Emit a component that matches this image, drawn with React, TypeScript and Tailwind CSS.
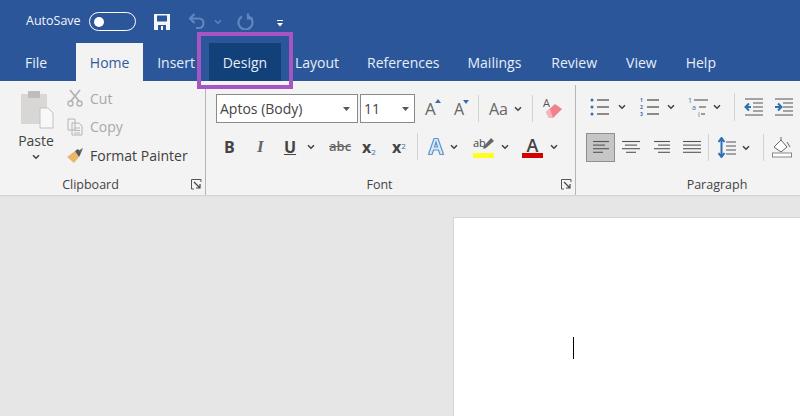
import React from "react";

const Chev = ({ w = 10, c = "#404040" }: { w?: number; c?: string }) => (
  <svg width={w} height="6" viewBox="0 0 10 6" fill="none" className="shrink-0"><path d="M2 1.200 5 4.200 8 1.200" stroke={c} strokeWidth="1.500" /></svg>
);
const Launcher = () => (
  <svg width="11" height="11" viewBox="0 0 11 11" fill="none"><path d="M10 3V.5H.5V10H3" stroke="#555" /><path d="M3 3 9 9M9 5v4H5" stroke="#444" strokeWidth="1.200" /></svg>
);
const Sep = ({ h = 27 }: { h?: number }) => <div className="w-px bg-[#d2d2d2] shrink-0" style={{ height: h }} />;

const Lines = ({ dots, color = "#444" }: { dots: "b" | "n" | "m"; color?: string }) => (
  <svg width="21" height="20" viewBox="0 0 21 20" fill="none">
    {dots === "b" && [3, 10, 17].map((y) => <circle key={y} cx="2" cy={y} r="1.500" fill="#3b6ea8" />)}
    {dots === "n" && ["1", "2", "3"].map((t, i) => <text key={t} x="0" y={5 + i * 7} fontSize="5" fontWeight="700" fill="#3b6ea8" fontFamily="Open Sans">{t}</text>)}
    {dots === "b" || dots === "n" ? [3, 10, 17].map((y) => <path key={y} d={`M7 ${y}H19`} stroke={color} strokeWidth="1.200" />) : null}
    {dots === "m" && (
      <>
        <text x="0" y="6" fontSize="7" fill="#3b6ea8" fontFamily="Open Sans">1</text>
        <text x="4" y="13" fontSize="7" fill="#3b6ea8" fontFamily="Open Sans">a</text>
        <text x="10" y="19.500" fontSize="7" fill="#3b6ea8" fontFamily="Open Sans">i</text>
        <path d="M6 3H20M11 10H18M13 17H17" stroke={color} strokeWidth="1.200" />
      </>
    )}
  </svg>
);

const Align = ({ rows }: { rows: [number, number][] }) => (
  <svg width="20" height="15" viewBox="0 0 20 15" fill="none">
    {rows.map(([a, b], i) => <path key={i} d={`M${a} ${1.500 + i * 3.600}H${b}`} stroke="#555" strokeWidth="1.100" />)}
  </svg>
);

const Indent = ({ inc }: { inc?: boolean }) => (
  <svg width="20" height="18" viewBox="0 0 20 18" fill="none">
    <path d="M1 1H19M9 5H19M9 9H19M9 13H19M1 17H19" stroke="#555" strokeWidth="1" />
    {inc ? <path d="M1 9H6M4 5.500 7.500 9 4 12.500" stroke="#2f6db5" strokeWidth="2" /> : <path d="M7 9H2M5 5.500 1.500 9 5 12.500" stroke="#2f6db5" strokeWidth="2" />}
  </svg>
);

const Tab = ({ label, cls = "" }: { label: string; cls?: string }) => (
  <div className={`h-full flex items-center px-[14px] text-[#e8eef8] ${cls}`}>{label}</div>
);

const GroupLabel = ({ children, launcher, cls = "" }: { children: string; launcher?: boolean; cls?: string }) => (
  <div className={`h-[20px] flex items-center relative justify-center text-[12.5px] text-[#444] ${cls}`}>
    {children}
    {launcher && <div className="absolute right-[3px] top-[4px]"><Launcher /></div>}
  </div>
);

export default function App() {
  return (
    <div className="relative w-[800px] h-[416px] overflow-hidden bg-[#e6e6e6] flex flex-col text-[14px]" style={{ fontFamily: '"Open Sans", "Noto Sans", sans-serif' }}>
      {/* Title bar */}
      <div className="h-[43px] bg-[#2b579a] flex items-center shrink-0 text-white pl-[26px]">
        <span className="text-[12.5px] w-[63px] text-[#f2f5fa]">AutoSave</span>
        <div className="w-[47px] h-[19px] rounded-full border-[1.5px] border-white flex items-center pl-[4px]">
          <div className="w-[10px] h-[10px] rounded-full bg-white" />
        </div>
        <svg className="ml-[18px]" width="16" height="16" viewBox="0 0 16 16">
          <path d="M0 0H16V16H0Z" fill="#f4f6fa" />
          <rect x="3" y="1.500" width="10" height="6" fill="#2b579a" />
          <rect x="4" y="11" width="8" height="5" fill="#2b579a" />
          <rect x="7" y="12" width="2" height="4" fill="#f4f6fa" />
        </svg>
        <svg className="ml-[18px]" width="18" height="17" viewBox="0 0 18 17" fill="none">
          <path d="M6.500 1 2 5.500 6.500 10" stroke="#5f86bd" strokeWidth="2.200" />
          <path d="M3 5.500H11C17 5.500 17 15 11 15H8" stroke="#5f86bd" strokeWidth="2.200" />
        </svg>
        <div className="ml-[7px]"><Chev w={10} c="#5f86bd" /></div>
        <svg className="ml-[14px]" width="17" height="17" viewBox="0 0 17 17" fill="none">
          <path d="M5 3.500A7 7 0 1 0 12 3.500" stroke="#5f86bd" strokeWidth="2.200" />
          <path d="M11 .5V5.500H16" stroke="#5f86bd" strokeWidth="2.200" />
        </svg>
        <svg className="ml-[23px] mt-[3px]" width="6" height="7" viewBox="0 0 6 7"><path d="M0 0H6V1H0ZM0 3H6L3 6.500Z" fill="#fff" /></svg>
      </div>
      {/* Tabs */}
      <div className="h-[38px] bg-[#2b579a] flex shrink-0 pl-[11px] text-[14px]">
        <Tab label="File" />
        <div className="ml-[15px] h-full w-[67px] flex items-center justify-center bg-[#f3f3f3] text-[#2f5a9a]">Home</div>
        <Tab label="Insert" />
        <div className="w-[72px] h-full flex items-center justify-center bg-[#124078] text-[#e8eef8]">Design</div>
        <Tab label="Layout" />
        <Tab label="References" />
        <Tab label="Mailings" />
        <Tab label="Review" cls="ml-[2px]" />
        <Tab label="View" cls="ml-[1px]" />
        <Tab label="Help" cls="ml-[1px]" />
      </div>
      {/* Ribbon */}
      <div className="h-[115px] bg-[#f3f3f3] border-b border-[#d4d4d4] flex shrink-0 pt-[4px] text-[#444]">
        {/* Clipboard */}
        <div className="w-[206px] h-[110px] border-r border-[#b5b5b5] flex flex-col shrink-0">
          <div className="h-[90px] flex">
            <div className="w-[62px] ml-[5px] flex flex-col items-center pt-[5px]">
              <svg width="34" height="39" viewBox="0 0 34 39" className="ml-[2px]">
                <rect x="1" y="4" width="26" height="30" fill="#d9d6d6" />
                <rect x="8" y="1" width="12" height="7" rx="1" fill="#bfbcbc" />
                <path d="M20 18H28L33 23V38H20Z" fill="#f8f8f8" stroke="#c4c2c2" />
              </svg>
              <span className="mt-[2px] leading-[20px]">Paste</span>
              <div className="mt-[3px]"><Chev /></div>
            </div>
            <div className="flex flex-col -mt-[1px]">
              <div className="h-[28.5px] flex items-center gap-[7px] text-[#a8a8a8]">
                <svg width="16" height="18" viewBox="0 0 16 18" fill="none"><path d="M3 1 12 12M13 1 4 12" stroke="#b4b4b4" strokeWidth="1.800" /><circle cx="3.500" cy="14.500" r="2.500" stroke="#b4b4b4" strokeWidth="1.400" /><circle cx="12.500" cy="14.500" r="2.500" stroke="#b4b4b4" strokeWidth="1.400" /></svg>
                Cut
              </div>
              <div className="h-[28.5px] flex items-center gap-[7px] text-[#a8a8a8]">
                <svg width="16" height="18" viewBox="0 0 16 18" fill="none"><path d="M1 1H8V12H1ZM5 5H12L15 8V17H5Z" stroke="#b4b4b4" fill="#f3f3f3" /><path d="M7 10H13M7 12.500H13M7 15H13" stroke="#b4b4b4" /></svg>
                Copy
              </div>
              <div className="h-[28.5px] flex items-center gap-[6px] text-[#404040]">
                <svg width="17" height="15" viewBox="0 0 17 15"><path d="M0 9 8 3 12 9 7 15Z" fill="#e8b868" /><path d="M8 3 11 1 14 5 12 9Z" fill="#555" /><path d="M11 3 16 0 14 5Z" fill="#666" /></svg>
                Format Painter
              </div>
            </div>
          </div>
          <GroupLabel launcher cls="pr-[24px]">Clipboard</GroupLabel>
        </div>
        {/* Font */}
        <div className="w-[370px] h-[110px] border-r border-[#b5b5b5] flex flex-col shrink-0 pl-[10px]">
          <div className="h-[38px] pt-[9px] flex items-start">
            <div className="w-[142px] h-[29px] bg-white border border-[#8a8a8a] flex items-center justify-between pl-[3px] pr-[7px] text-[#444]">
              <span>Aptos (Body)</span>
              <svg width="7" height="4" viewBox="0 0 7 4"><path d="M0 0H7L3.500 4Z" fill="#555" /></svg>
            </div>
            <div className="ml-[2px] w-[55px] h-[29px] bg-white border border-[#8a8a8a] flex items-center justify-between pl-[3px] pr-[5px] text-[#444]">
              <span>11</span>
              <svg width="7" height="4" viewBox="0 0 7 4"><path d="M0 0H7L3.500 4Z" fill="#555" /></svg>
            </div>
            <div className="flex items-center h-[29px] text-[#666]">
              <div className="w-[10px]" />
              <span className="text-[17px] relative w-[29px]">A<svg className="absolute left-[10px] top-[3px]" width="6" height="4"><path d="M0 4 3 0 6 4Z" fill="#3b6ea8" /></svg></span>
              <span className="text-[16px] relative w-[24px]">A<svg className="absolute left-[9px] top-[3px]" width="6" height="4"><path d="M0 0H6L3 4Z" fill="#3b6ea8" /></svg></span>
              <Sep />
              <span className="text-[16px] ml-[10px] w-[24px]">Aa</span>
              <div className="w-[12px]"><Chev /></div>
              <div className="w-[7px]" />
              <Sep />
              <div className="ml-[10px] relative w-[20px] h-[24px]">
                <span className="absolute left-0 -top-[2px] text-[11px] text-[#555]">A</span>
                <svg className="absolute left-[2px] top-[4px]" width="18" height="18" viewBox="0 0 18 18">
                  <path d="M1 11 10 3 17 8 8 17H4Z" fill="#f0808c" />
                  <path d="M1 11 4 17H8L5 8Z" fill="#f7b5bc" />
                </svg>
              </div>
            </div>
          </div>
          <div className="h-[52px] pt-[10px] flex items-start text-[#444]">
            <div className="h-[27px] flex items-center">
              <span className="w-[31px] pl-[8px] font-bold text-[16px]">B</span>
              <span className="w-[29px] pl-[10px] italic font-bold text-[17px] text-[#666]" style={{ fontFamily: '"Liberation Serif", serif' }}>I</span>
              <span className="w-[30px] pl-[8px] font-bold text-[16px] underline">U</span>
              <div className="w-[21px]"><Chev /></div>
              <span className="w-[33px] pl-[2px] text-[13px] font-semibold line-through text-[#666]">abc</span>
              <span className="w-[30px] text-[16px] font-bold pl-[2px]">x<sub className="text-[8px] font-normal text-[#3b6ea8]">2</sub></span>
              <span className="w-[27px] text-[16px] font-bold pl-[2px]">x<sup className="text-[8px] font-normal text-[#3b6ea8]">2</sup></span>
              <Sep />
              <svg className="ml-[9px]" width="18" height="19" viewBox="0 0 18 19" fill="none"><path d="M1.500 17.500 7 1.500H11L16.500 17.500H13L11.500 13H6.500L5 17.500ZM7.500 10H10.500L9 5Z" fill="#dbe9f7" stroke="#5d95cf" strokeWidth="1.200" /></svg>
              <div className="ml-[4px] w-[24px]"><Chev /></div>
              <div className="w-[21px] relative h-[22px] flex flex-col items-center">
                <span className="text-[11px] leading-[13px] self-start">ab</span>
                <div className="absolute right-0 top-[2px]"><svg width="11" height="12" viewBox="0 0 11 12"><path d="M0 11 1 8 8 0 11 3 3 10Z" fill="#666" /></svg></div>
                <div className="absolute left-0 bottom-0 w-[21px] h-[5px] bg-[#ffff1e]" />
              </div>
              <div className="ml-[6px] w-[22px]"><Chev /></div>
              <div className="w-[21px] h-[22px] relative flex justify-center">
                <span className="text-[18px] leading-[18px] font-semibold">A</span>
                <div className="absolute left-0 bottom-0 w-[21px] h-[5px] bg-[#d30000]" />
              </div>
              <div className="ml-[6px]"><Chev /></div>
            </div>
          </div>
          <GroupLabel launcher cls="pr-[32px]">Font</GroupLabel>
        </div>
        {/* Paragraph */}
        <div className="flex-1 h-[110px] flex flex-col pl-[10px]">
          <div className="h-[48px] pt-[12px] flex items-start">
            <div className="h-[20px] flex items-center">
              <div className="ml-[4px] w-[27px]"><Lines dots="b" /></div>
              <div className="w-[23px]"><Chev /></div>
              <div className="w-[26px]"><Lines dots="n" /></div>
              <div className="w-[22px]"><Chev /></div>
              <div className="w-[24px]"><Lines dots="m" /></div>
              <div className="w-[22px]"><Chev /></div>
              <div className="mr-[9px]"><Sep h={28} /></div>
              <div className="w-[30px]"><Indent /></div>
              <Indent inc />
            </div>
          </div>
          <div className="h-[42px] flex items-start">
            <div className="w-[29px] h-[29px] bg-[#c6c6c6] border border-[#8f8f8f] flex items-center justify-center">
              <Align rows={[[2, 18], [2, 14], [2, 18], [2, 12]]} />
            </div>
            <div className="h-[29px] flex items-center">
              <div className="w-[31px] flex justify-center"><Align rows={[[1, 19], [4, 16], [1, 19], [5, 15]]} /></div>
              <div className="w-[30px] flex justify-center"><Align rows={[[3, 19], [7, 19], [3, 19], [7, 19]]} /></div>
              <div className="w-[32px] flex justify-center"><Align rows={[[1, 19], [1, 19], [1, 19], [1, 19], [1, 19]]} /></div>
              <Sep />
              <svg className="ml-[9px]" width="18" height="21" viewBox="0 0 18 21" fill="none">
                <path d="M8 5H18M8 9H18M8 13H18M8 17H18" stroke="#555" />
                <path d="M3.500 1V20M.5 5 3.500 1 6.500 5M.5 16 3.500 20 6.500 16" stroke="#2f6db5" strokeWidth="2" />
              </svg>
              <div className="ml-[5px] w-[22px]"><Chev /></div>
              <Sep />
              <svg className="ml-[8px]" width="20" height="21" viewBox="0 0 20 21" fill="none">
                <path d="M2 10 9 3 15 10 9 15Z" stroke="#666" fill="#fff" />
                <path d="M9 3V0M15 5 18 10" stroke="#666" />
                <rect x="0.500" y="16" width="19" height="4" stroke="#888" fill="#fff" />
              </svg>
            </div>
          </div>
          <GroupLabel cls="pl-[48px]">Paragraph</GroupLabel>
        </div>
      </div>
      {/* Document area */}
      <div className="flex-1 pt-[20px] pl-[453px] border-t border-[#e0e0e0]">
        <div className="w-[347px] h-[200px] bg-white border-l border-t border-[#d6d6d6] pt-[119px] pl-[119px]">
          <div className="w-px h-[22px] bg-black" />
        </div>
      </div>
      {/* Highlight box */}
      <div className="absolute left-[197px] top-[32px] w-[96px] h-[57px] border-[4px] border-[#a855c4]" />
    </div>
  );
}
